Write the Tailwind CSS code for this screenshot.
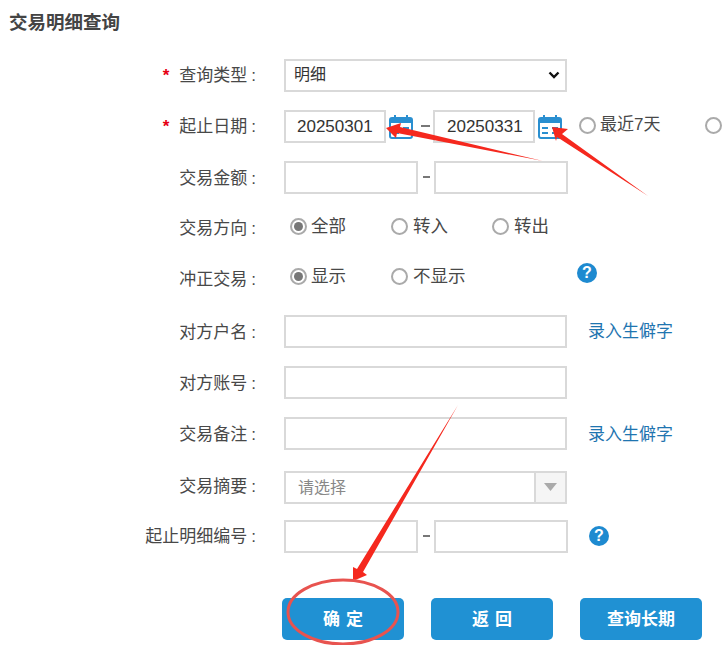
<!DOCTYPE html>
<html lang="zh-CN">
<head>
  <meta charset="UTF-8">
  <meta name="viewport" content="width=device-width, initial-scale=1.0">
  <title>交易明细查询</title>
  <script src="https://cdn.jsdelivr.net/npm/@tailwindcss/browser@4"></script>
</head>
<body class="bg-white">
<div class="relative w-[724px] h-[645px] overflow-hidden bg-white text-[#484848] text-[17px] font-['Liberation_Sans','Noto_Sans_CJK_SC',sans-serif]">

  <h1 class="pl-[9px] pt-[10px] h-[59px] text-[18.5px] leading-[26px] font-bold text-[#444]">交易明细查询</h1>

  <!-- form rows -->
  <div class="flex items-center h-[32px]">
    <label class="flex justify-end w-[258px] pr-[2px] pt-[2px] leading-[32px]"><span class="text-[#e60012] mr-[10px] text-[17px] font-bold">*</span>查询类型<span class="ml-[4px]">:</span></label>
    <div class="ml-[26px] flex items-center justify-between w-[283px] h-[33px] border-2 border-[#d9d9d9] pl-[8px] pr-[5px] text-[16px] text-[#333]">
      <span>明细</span>
      <svg class="w-[12px] h-[8px]" viewBox="0 0 12 8"><path d="M1.5 1.500 6 6l4.500-4.500" fill="none" stroke="#111" stroke-width="2.4"/></svg>
    </div>
  </div>

  <div class="flex items-center h-[32px] mt-[19px]">
    <label class="flex justify-end w-[258px] pr-[2px] pt-[2px] leading-[32px]"><span class="text-[#e60012] mr-[10px] text-[17px] font-bold">*</span>起止日期<span class="ml-[4px]">:</span></label>
    <div class="ml-[26px] w-[102px] h-[33px] border-2 border-[#d9d9d9] pl-[11px] leading-[30px] text-[17px] text-[#333]">20250301</div>
    <svg class="ml-[3px] w-[24px] h-[25px]" viewBox="0 0 24 25"><rect x="1" y="4" width="22" height="20" rx="2" fill="none" stroke="#2a8fd0" stroke-width="2"/><path d="M1 4h22v5H1z" fill="#2a8fd0"/><path d="M6 1v5M18 1v5" stroke="#2a8fd0" stroke-width="2"/><path d="M4 14h6M14 14h6M4 19h6M14 19h6" stroke="#2a8fd0" stroke-width="2"/></svg>
    <span class="ml-[8px] w-[9px] h-[1.5px] bg-[#777]"></span>
    <div class="ml-[3px] w-[102px] h-[33px] border-2 border-[#d9d9d9] pl-[12px] leading-[30px] text-[17px] text-[#333]">20250331</div>
    <svg class="ml-[3px] w-[24px] h-[25px]" viewBox="0 0 24 25"><rect x="1" y="4" width="22" height="20" rx="2" fill="none" stroke="#2a8fd0" stroke-width="2"/><path d="M1 4h22v5H1z" fill="#2a8fd0"/><path d="M6 1v5M18 1v5" stroke="#2a8fd0" stroke-width="2"/><path d="M4 14h6M14 14h6M4 19h6M14 19h6" stroke="#2a8fd0" stroke-width="2"/></svg>
    <span class="ml-[17px] w-[17px] h-[17px] shrink-0 rounded-full border-2 border-[#aaa] -mt-[2px]"></span>
    <span class="ml-[4px] whitespace-nowrap -mt-[2px]">最近7天</span>
    <span class="ml-[45px] w-[17px] h-[17px] shrink-0 rounded-full border-2 border-[#aaa] -mt-[2px]"></span>
  </div>

  <div class="flex items-center h-[32px] mt-[19px]">
    <label class="w-[258px] pr-[2px] text-right pt-[3px] leading-[32px]">交易金额<span class="ml-[4px]">:</span></label>
    <div class="ml-[26px] w-[134px] h-[33px] border-2 border-[#d9d9d9]"></div>
    <span class="ml-[5px] w-[7px] h-[1.5px] bg-[#777]"></span>
    <div class="ml-[4px] w-[134px] h-[33px] border-2 border-[#d9d9d9]"></div>
  </div>

  <div class="flex items-center h-[32px] mt-[19px] pb-[4px]">
    <label class="w-[258px] pr-[2px] text-right pt-[5px] leading-[32px]">交易方向<span class="ml-[4px]">:</span></label>
    <span class="ml-[32px] w-[17px] h-[17px] rounded-full border-2 border-[#aaa] flex items-center justify-center"><span class="w-[9px] h-[9px] rounded-full bg-[#777]"></span></span>
    <span class="ml-[4px] w-[80px] text-[17.5px]">全部</span>
    <span class="w-[17px] h-[17px] rounded-full border-2 border-[#aaa]"></span>
    <span class="ml-[5px] w-[79px] text-[17.5px]">转入</span>
    <span class="w-[17px] h-[17px] rounded-full border-2 border-[#aaa]"></span>
    <span class="ml-[5px] text-[17.5px]">转出</span>
  </div>

  <div class="flex items-center h-[32px] mt-[19px] pb-[6px]">
    <label class="w-[258px] pr-[2px] text-right pt-[8px] leading-[32px]">冲正交易<span class="ml-[4px]">:</span></label>
    <span class="ml-[32px] w-[17px] h-[17px] rounded-full border-2 border-[#aaa] flex items-center justify-center"><span class="w-[9px] h-[9px] rounded-full bg-[#777]"></span></span>
    <span class="ml-[4px] w-[80px] text-[17.5px]">显示</span>
    <span class="w-[17px] h-[17px] rounded-full border-2 border-[#aaa]"></span>
    <span class="ml-[5px] w-[164px] text-[17.5px]">不显示</span>
    <span class="w-[20px] h-[20px] rounded-full bg-[#1e8ad0] text-white text-[16px] font-bold leading-[20px] text-center -mt-[6px]">?</span>
  </div>

  <div class="flex items-center h-[32px] mt-[20px]">
    <label class="w-[258px] pr-[2px] text-right pt-[3px] leading-[32px]">对方户名<span class="ml-[4px]">:</span></label>
    <div class="ml-[26px] w-[283px] h-[33px] border-2 border-[#d9d9d9]"></div>
    <a class="ml-[21px] pt-[2px] text-[#1f75b0] whitespace-nowrap">录入生僻字</a>
  </div>

  <div class="flex items-center h-[32px] mt-[19px]">
    <label class="w-[258px] pr-[2px] text-right pt-[3px] leading-[32px]">对方账号<span class="ml-[4px]">:</span></label>
    <div class="ml-[26px] w-[283px] h-[33px] border-2 border-[#d9d9d9]"></div>
  </div>

  <div class="flex items-center h-[32px] mt-[19px]">
    <label class="w-[258px] pr-[2px] text-right pt-[4px] leading-[32px]">交易备注<span class="ml-[4px]">:</span></label>
    <div class="ml-[26px] w-[283px] h-[33px] border-2 border-[#d9d9d9]"></div>
    <a class="ml-[21px] pt-[3px] text-[#1f75b0] whitespace-nowrap">录入生僻字</a>
  </div>

  <div class="flex items-center h-[32px] mt-[22px]">
    <label class="w-[258px] pr-[2px] text-right leading-[32px]">交易摘要<span class="ml-[4px]">:</span></label>
    <div class="ml-[26px] flex w-[283px] h-[33px] border-2 border-[#d9d9d9]">
      <span class="flex-1 pl-[12px] leading-[29px] text-[16px] text-[#888]">请选择</span>
      <span class="w-[31px] flex items-center justify-center border-l-2 border-[#d9d9d9] bg-[#f5f5f5]">
        <svg class="w-[13px] h-[8px]" viewBox="0 0 13 8"><path d="M0 0h13L6.500 8z" fill="#aaa"/></svg>
      </span>
    </div>
  </div>

  <div class="flex items-center h-[32px] mt-[17px]">
    <label class="w-[258px] pr-[2px] text-right pt-[1px] leading-[32px]">起止明细编号<span class="ml-[4px]">:</span></label>
    <div class="ml-[26px] w-[134px] h-[33px] border-2 border-[#d9d9d9]"></div>
    <span class="ml-[5px] w-[7px] h-[1.5px] bg-[#777]"></span>
    <div class="ml-[4px] w-[134px] h-[33px] border-2 border-[#d9d9d9]"></div>
    <span class="ml-[21px] w-[20px] h-[20px] rounded-full bg-[#1e8ad0] text-white text-[16px] font-bold leading-[20px] text-center">?</span>
  </div>

  <!-- buttons -->
  <div class="flex gap-[27px] ml-[282px] mt-[46px]">
    <button class="w-[122px] h-[42px] pt-[2px] pl-[6px] rounded-[5px] bg-[#2091d3] text-white text-[17px] font-bold tracking-[6px]">确定</button>
    <button class="w-[122px] h-[42px] pt-[2px] pl-[6px] rounded-[5px] bg-[#2091d3] text-white text-[17px] font-bold tracking-[6px]">返回</button>
    <button class="w-[122px] h-[42px] pt-[2px] rounded-[5px] bg-[#2091d3] text-white text-[17px] font-bold">查询长期</button>
  </div>

  <!-- red annotations drawn over the screenshot -->
  <svg class="absolute inset-0 pointer-events-none" width="724" height="645" viewBox="0 0 724 645">
    <path d="M386 128 L401 123 L400 127 L543 161 L397 133 L396 138 Z" fill="#f5281e"/>
    <path d="M552 127 L568 129 L562 134 L648 196 L557 137 L556 141 Z" fill="#f5281e"/>
    <path d="M353 581 L353 567 L357 569 L458 405 L363 572 L367 575 Z" fill="#f5281e"/>
    <ellipse cx="343" cy="612" rx="55" ry="32" fill="none" stroke="#e8534f" stroke-width="3"/>
  </svg>
</div>
</body>
</html>
